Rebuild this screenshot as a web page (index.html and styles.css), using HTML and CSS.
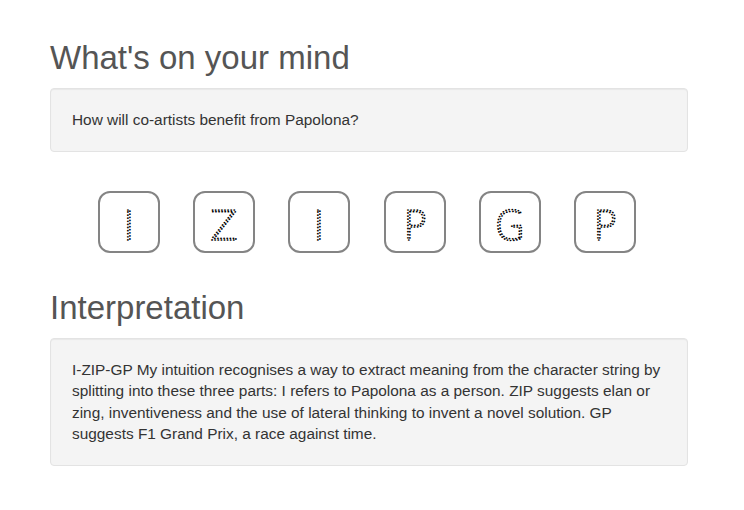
FILE: index.html
```html
<!DOCTYPE html>
<html lang="en">
<head>
<meta charset="utf-8">
<title>What's on your mind</title>
<link rel="stylesheet" href="styles.css">
</head>
<body>
<main class="page">
  <h1 class="title">What's on your mind</h1>
  <div class="well">How will co-artists benefit from Papolona?</div>

  <div class="tiles">
    <div class="tile"><svg viewBox="0 0 58 58" width="58" height="58"><text x="29" y="47" text-anchor="middle" class="glyph">I</text></svg></div>
    <div class="tile"><svg viewBox="0 0 58 58" width="58" height="58"><text x="29" y="47" text-anchor="middle" class="glyph">Z</text></svg></div>
    <div class="tile"><svg viewBox="0 0 58 58" width="58" height="58"><text x="29" y="47" text-anchor="middle" class="glyph">I</text></svg></div>
    <div class="tile"><svg viewBox="0 0 58 58" width="58" height="58"><text x="29" y="47" text-anchor="middle" class="glyph">P</text></svg></div>
    <div class="tile"><svg viewBox="0 0 58 58" width="58" height="58"><text x="29" y="47" text-anchor="middle" class="glyph">G</text></svg></div>
    <div class="tile"><svg viewBox="0 0 58 58" width="58" height="58"><text x="29" y="47" text-anchor="middle" class="glyph">P</text></svg></div>
  </div>

  <h1 class="title">Interpretation</h1>
  <div class="well">I-ZIP-GP My intuition recognises a way to extract meaning from the character string by splitting into these three parts: I refers to Papolona as a person. ZIP suggests elan or zing, inventiveness and the use of lateral thinking to invent a novel solution. GP suggests F1 Grand Prix, a race against time.</div>
</main>
</body>
</html>
```

FILE: styles.css
```css
html, body {
  margin: 0;
  padding: 0;
  background: #ffffff;
}

body {
  font-family: "Liberation Sans", Arial, sans-serif;
  font-size: 15.4px;
  line-height: 21.4px;
  color: #333333;
}

.page {
  width: 638px;
  margin: 0 0 0 50px;
  padding-top: 40px;
  display: flex;
  flex-direction: column;
}

.title {
  margin: 0 0 12px 0;
  font-size: 33px;
  font-weight: 400;
  line-height: 36.3px;
  color: #555555;
}

.well {
  background: #f4f4f4;
  border: 1px solid #e3e3e3;
  border-radius: 4px;
  box-shadow: inset 0 1px 1px rgba(0, 0, 0, 0.05);
  padding: 20px 21px;
}

.tiles {
  display: flex;
  justify-content: center;
  gap: 33.4px;
  margin: 39px 0 37px 0;
  padding-right: 4px;
}

.tile {
  width: 58px;
  height: 58px;
  border: 2px solid #848484;
  border-radius: 12px;
  background: #ffffff;
  display: flex;
  align-items: center;
  justify-content: center;
}

.tile svg {
  display: block;
}

.glyph {
  font-family: "DejaVu Sans", sans-serif;
  font-weight: 200;
  font-size: 40px;
  fill: none;
  stroke: #000000;
  stroke-width: 1.7;
  stroke-dasharray: 0.1 3;
  stroke-linecap: round;
}
```
